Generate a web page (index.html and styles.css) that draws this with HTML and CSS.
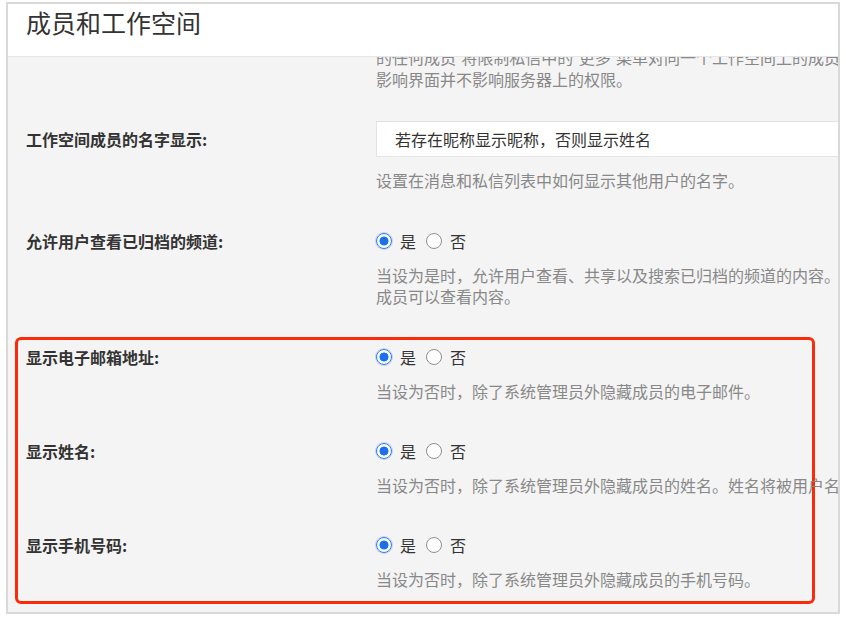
FILE: index.html
```html
<!DOCTYPE html>
<html lang="zh-CN">
<head>
<meta charset="utf-8">
<title>成员和工作空间</title>
<link rel="stylesheet" href="styles.css">
</head>
<body>
<div class="frame">
  <header class="header">
    <h1 class="title">成员和工作空间</h1>
  </header>
  <div class="content">
    <div class="scroll">
      <div class="row intro">
        <div class="label"></div>
        <p class="help">的任何成员<span class="q">”</span>将限制私信中的<span class="q">“</span>更多<span class="q">”</span>菜单对同一个工作空间上的成员。这个设定只影响界面并不影响服务器上的权限。</p>
      </div>

      <div class="row">
        <div class="label">工作空间成员的名字显示:</div>
        <div class="select">若存在昵称显示昵称，否则显示姓名</div>
        <p class="help">设置在消息和私信列表中如何显示其他用户的名字。</p>
      </div>

      <div class="row">
        <div class="label">允许用户查看已归档的频道:</div>
        <div class="radios">
          <label class="opt"><input type="radio" name="archived" checked>是</label>
          <label class="opt"><input type="radio" name="archived">否</label>
        </div>
        <p class="help">当设为是时，允许用户查看、共享以及搜索已归档的频道的内容。否则只有频道成员可以查看内容。</p>
      </div>

      <div class="highlight">
        <div class="row">
          <div class="label">显示电子邮箱地址:</div>
          <div class="radios">
            <label class="opt"><input type="radio" name="email" checked>是</label>
            <label class="opt"><input type="radio" name="email">否</label>
          </div>
          <p class="help">当设为否时，除了系统管理员外隐藏成员的电子邮件。</p>
        </div>

        <div class="row">
          <div class="label">显示姓名:</div>
          <div class="radios">
            <label class="opt"><input type="radio" name="fullname" checked>是</label>
            <label class="opt"><input type="radio" name="fullname">否</label>
          </div>
          <p class="help">当设为否时，除了系统管理员外隐藏成员的姓名。姓名将被用户名代替。</p>
        </div>

        <div class="row">
          <div class="label">显示手机号码:</div>
          <div class="radios">
            <label class="opt"><input type="radio" name="phone" checked>是</label>
            <label class="opt"><input type="radio" name="phone">否</label>
          </div>
          <p class="help">当设为否时，除了系统管理员外隐藏成员的手机号码。</p>
        </div>
      </div>
    </div>
  </div>
</div>
</body>
</html>
```

FILE: styles.css
```css
* {
  box-sizing: border-box;
}

html, body {
  margin: 0;
  padding: 0;
  background: #ffffff;
}

body {
  font-family: "Noto Sans CJK SC", "Noto Sans", "Liberation Sans", sans-serif;
  color: #333333;
}

.frame {
  margin: 2px 0 0 6px;
  width: 834px;
  height: 612px;
  border: 2px solid #d9d9d9;
  display: flex;
  flex-direction: column;
  overflow: hidden;
}

.header {
  flex: 0 0 auto;
  height: 53px;
  background: #ffffff;
  border-bottom: 1px solid #e6e6e6;
  padding-left: 18px;
}

.title {
  margin: 0;
  font-size: 25px;
  line-height: 36px;
  font-weight: 400;
  color: #333333;
}

.content {
  flex: 1 1 auto;
  background: #f4f4f4;
  overflow: hidden;
}

.scroll {
  margin-top: -10px;
  display: flex;
  flex-direction: column;
  gap: 39px;
}

.row {
  display: grid;
  grid-template-columns: 350px 565px;
  padding-left: 18px;
}

.intro {
  margin-bottom: -8px;
}

.label {
  grid-column: 1;
  grid-row: 1;
  align-self: center;
  font-size: 16px;
  font-weight: 600;
  color: #333333;
  line-height: 22px;
}

.select {
  grid-column: 2;
  grid-row: 1;
  height: 36px;
  background: #ffffff;
  border: 1px solid #e3e3e3;
  padding-left: 18px;
  font-size: 16px;
  line-height: 34px;
  color: #333333;
  white-space: nowrap;
}

.radios {
  grid-column: 2;
  grid-row: 1;
  display: flex;
  align-items: center;
  height: 22px;
  gap: 10px;
}

.opt {
  display: flex;
  align-items: center;
  gap: 8px;
  font-size: 16px;
  line-height: 22px;
  color: #333333;
}

.opt input {
  appearance: none;
  -webkit-appearance: none;
  margin: 0;
  width: 16px;
  height: 16px;
  border-radius: 50%;
  border: 1px solid #8f8f8f;
  background: #ffffff;
}

.opt input:checked {
  border: 1.5px solid #2b7bf3;
  background: radial-gradient(circle, #1a6ff2 0 4.2px, #ffffff 4.8px);
  box-shadow: 0 0 0 1px rgba(43, 123, 243, 0.25);
}

.help {
  grid-column: 2;
  grid-row: 2;
  margin: 13px 0 0;
  font-size: 16px;
  line-height: 21px;
  color: #888888;
}

.intro .help {
  grid-row: 1;
  margin: 0;
}

.q {
  font-family: "Liberation Sans", sans-serif;
}

.highlight {
  margin: -9px 0 0 7px;
  width: 800px;
  border: 3px solid #fb2a0b;
  border-radius: 6px;
  padding: 6px 0 11px;
  display: flex;
  flex-direction: column;
  gap: 38px;
}

.highlight .row {
  padding-left: 8px;
}

.highlight .help {
  white-space: nowrap;
}
```
